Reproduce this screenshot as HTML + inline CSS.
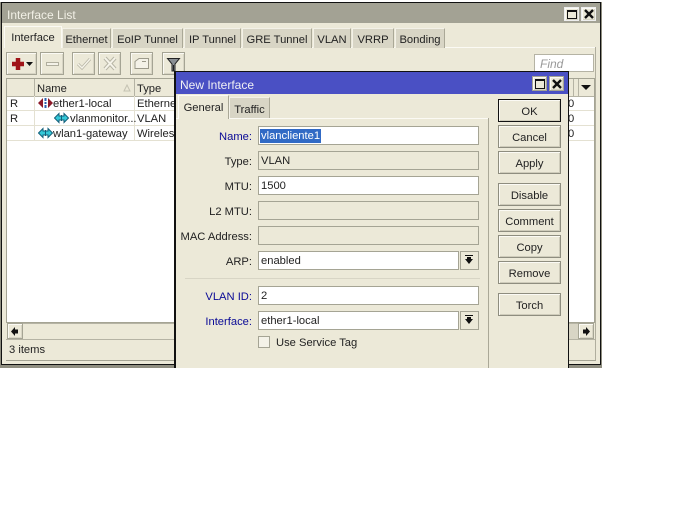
<!DOCTYPE html>
<html><head><meta charset="utf-8">
<style>
html,body{margin:0;padding:0;width:700px;height:525px;background:#fff;overflow:hidden}
body{font:11.2px "Liberation Sans",sans-serif;color:#222;position:relative}
div,span.t,svg{position:absolute}
.t{position:absolute;white-space:nowrap;line-height:14px;margin-top:1px}
.btn{background:#ece9d8;border:1px solid #a5a494;box-shadow:inset 1px 1px 0 #fbfaf4,inset -1px -1px 0 #d8d5c5;box-sizing:border-box}
.dbtn{width:63px;height:23px;left:498px;text-align:center;line-height:24px;background:#ece9d8;border:1px solid #8e8d7f;box-sizing:border-box;box-shadow:inset 1px 1px 0 #fbfaf4,inset -1px -1px 0 #cfccbb}
.tab{top:28px;height:20px;background:#d8d5c5;border:1px solid #f3f1e7;border-right-color:#aaa897;border-bottom:0;box-sizing:border-box;text-align:center;line-height:22px}
.in{left:258px;width:221px;height:19px;box-sizing:border-box;border:1px solid #a5a494;background:#fff;padding-left:2px;line-height:19px}
.ro{background:#ece9d8}
.lb{right:448px;line-height:14px;white-space:nowrap}
.blue{color:#0a0a96}
.drop{left:460px;width:19px;height:19px;background:#ece9d8;border:1px solid #a5a494;box-sizing:border-box}
.hl{height:1px;background:#e4e1d2}
</style></head><body>

<!-- outer window -->
<div style="left:0;top:2px;width:602px;height:366px;background:#8f8e80"></div>
<div style="left:1px;top:2px;width:600px;height:363px;background:#111"></div>
<div style="left:2px;top:3px;width:598px;height:361px;background:#ece9d8"></div>
<div style="left:2px;top:3px;width:598px;height:20px;background:#a3a294"></div>
<span class="t" style="left:7px;top:8px;margin-top:0;color:#f2f0e6;font-size:12px">Interface List</span>
<div class="btn" style="left:564px;top:7px;width:15px;height:14px;border-color:#eee"><div style="left:2px;top:2px;width:8px;height:6px;border:1px solid #111;border-top-width:2px"></div></div>
<div class="btn" style="left:581px;top:7px;width:15px;height:14px;border-color:#eee"><svg style="left:2px;top:1px" width="10" height="10"><path d="M1 1l8 8M9 1L1 9" stroke="#111" stroke-width="2.400"/></svg></div>

<!-- tabs -->
<div style="left:6px;top:47px;width:590px;height:1px;background:#fbfaf4"></div>
<div style="left:595px;top:47px;width:1px;height:314px;background:#b0ae9e"></div>
<div style="left:4px;top:26px;width:58px;height:22px;background:#ece9d8;border:1px solid #fbfaf4;border-bottom:0;box-sizing:border-box;text-align:center;line-height:22px">Interface</div>
<div class="tab" style="left:62px;width:49px">Ethernet</div>
<div class="tab" style="left:112px;width:71px">EoIP Tunnel</div>
<div class="tab" style="left:184px;width:57px">IP Tunnel</div>
<div class="tab" style="left:242px;width:70px">GRE Tunnel</div>
<div class="tab" style="left:313px;width:38px">VLAN</div>
<div class="tab" style="left:352px;width:42px">VRRP</div>
<div class="tab" style="left:395px;width:50px">Bonding</div>

<!-- toolbar -->
<div class="btn" style="left:6px;top:52px;width:31px;height:23px"></div>
<svg style="left:10px;top:56px" width="24" height="15"><path d="M2 8h12M8 2v12" stroke="#a01418" stroke-width="4.500"/><path d="M16 6h7l-3.500 4z" fill="#111"/></svg>
<div class="btn" style="left:40px;top:52px;width:24px;height:23px"></div>
<div style="left:46px;top:62px;width:11px;height:2px;border:1px solid #b0ae9e;background:#f4f2e8"></div>
<div class="btn" style="left:72px;top:52px;width:23px;height:23px"></div>
<svg style="left:76px;top:56px" width="16" height="15"><path d="M2 8l4 4 8-9" stroke="#b8b6a6" stroke-width="3" fill="none"/><path d="M2 8l4 4 8-9" stroke="#f6f4ea" stroke-width="1.400" fill="none"/></svg>
<div class="btn" style="left:98px;top:52px;width:23px;height:23px"></div>
<svg style="left:102px;top:56px" width="16" height="15"><path d="M3 2l10 11M13 2L3 13" stroke="#b8b6a6" stroke-width="4" fill="none"/><path d="M3 2l10 11M13 2L3 13" stroke="#f6f4ea" stroke-width="2" fill="none"/></svg>
<div class="btn" style="left:130px;top:52px;width:23px;height:23px"></div>
<svg style="left:134px;top:57px" width="16" height="14"><path d="M1 4.500l4-3h9.500v10H1z" stroke="#9c9a8b" fill="#f4f2e8"/><path d="M8 4.500h4" stroke="#9c9a8b"/></svg>
<div class="btn" style="left:162px;top:52px;width:23px;height:23px"></div>
<svg style="left:166px;top:56px" width="16" height="16"><path d="M1.500 2.500h12l-4.500 5.500v7H6V8z" fill="#8a8f94" stroke="#222"/><path d="M7 9h1v6H7z" fill="#222"/></svg>
<div style="left:534px;top:54px;width:60px;height:18px;box-sizing:border-box;background:#fff;border:1px solid #b5b3a4"></div>
<span class="t" style="left:540px;top:56px;color:#999;font-style:italic;font-size:12px">Find</span>

<!-- table -->
<div style="left:6px;top:78px;width:589px;height:245px;background:#fff;border:1px solid #a5a494;box-sizing:border-box"></div>
<div style="left:7px;top:79px;width:587px;height:17px;background:#ece9d8;border-bottom:1px solid #b5b3a4"></div>
<div style="left:34px;top:79px;width:1px;height:17px;background:#b5b3a4"></div>
<div style="left:134px;top:79px;width:1px;height:17px;background:#b5b3a4"></div>
<div style="left:573px;top:79px;width:1px;height:17px;background:#b5b3a4"></div>
<div style="left:578px;top:79px;width:1px;height:17px;background:#b5b3a4"></div>
<span class="t" style="left:37px;top:81px">Name</span>
<svg style="left:123px;top:84px" width="8" height="8"><path d="M4 1l3 6H1z" fill="none" stroke="#c4c2b2"/></svg>
<span class="t" style="left:137px;top:81px">Type</span>
<svg style="left:581px;top:84px" width="12" height="8"><path d="M0 1h10l-5 5z" fill="#111"/></svg>
<div class="hl" style="left:7px;top:110px;width:587px"></div>
<div class="hl" style="left:7px;top:125px;width:587px"></div>
<div class="hl" style="left:7px;top:140px;width:587px"></div>
<div style="left:34px;top:96px;width:1px;height:45px;background:#e4e1d2"></div>
<div style="left:134px;top:96px;width:1px;height:45px;background:#e4e1d2"></div>
<span class="t" style="left:10px;top:96px">R</span>
<span class="t" style="left:10px;top:111px">R</span>
<svg style="left:38px;top:97px" width="15" height="12"><path d="M5 1L0 6l5 5zM10 1l5 5-5 5z" fill="#8c1a2a"/><path d="M7.500 1v3M7.500 5v2M7.500 8v3" stroke="#2a5fb0" stroke-width="2"/></svg>
<span class="t" style="left:53px;top:96px">ether1-local</span>
<svg style="left:54px;top:112px" width="15" height="12"><path d="M.5 6L5 1.500V4h5V1.500L14.500 6 10 10.500V8H5v2.500z" fill="#35c8d8" stroke="#14607a"/><path d="M7.500 3v6" stroke="#14607a"/></svg>
<span class="t" style="left:70px;top:111px">vlanmonitor...</span>
<svg style="left:38px;top:127px" width="15" height="12"><path d="M.5 6L5 1.500V4h5V1.500L14.500 6 10 10.500V8H5v2.500z" fill="#35c8d8" stroke="#14607a"/><path d="M7.500 3v6" stroke="#14607a"/></svg>
<span class="t" style="left:53px;top:126px">wlan1-gateway</span>
<span class="t" style="left:137px;top:96px">Ethernet</span>
<span class="t" style="left:137px;top:111px">VLAN</span>
<span class="t" style="left:137px;top:126px">Wireless</span>
<span class="t" style="left:568px;top:96px">0</span>
<span class="t" style="left:568px;top:111px">0</span>
<span class="t" style="left:568px;top:126px">0</span>

<!-- scrollbar -->
<div style="left:7px;top:323px;width:587px;height:16px;background:#ece9d8;border-top:1px solid #b5b3a4;box-sizing:border-box"></div>
<div style="left:500px;top:324px;width:78px;height:15px;background:#d8d5c5"></div>
<div class="btn" style="left:7px;top:323px;width:16px;height:16px"></div>
<svg style="left:11px;top:327px" width="8" height="9"><path d="M0 4.500L4 0v2.500h3v4H4V9z" fill="#111"/></svg>
<div class="btn" style="left:578px;top:323px;width:16px;height:16px"></div>
<svg style="left:583px;top:327px" width="8" height="9"><path d="M7 4.500L3 0v2.500H0v4h3V9z" fill="#111"/></svg>
<div style="left:6px;top:339px;width:589px;height:1px;background:#b5b3a4"></div>
<div style="left:6px;top:360px;width:590px;height:1px;background:#a5a494"></div>
<span class="t" style="left:9px;top:342px">3 items</span>

<!-- dialog -->
<div style="left:174px;top:71px;width:395px;height:297px;background:#111"></div>
<div style="left:176px;top:72px;width:392px;height:296px;background:#ece9d8"></div>
<div style="left:176px;top:72px;width:392px;height:22px;background:#4a50c4"></div>
<span class="t" style="left:180px;top:78px;margin-top:0;color:#f0f0f4;font-size:12px">New Interface</span>
<div class="btn" style="left:532px;top:76px;width:15px;height:15px"><div style="left:2px;top:2px;width:8px;height:7px;border:1px solid #111;border-top-width:2px"></div></div>
<div class="btn" style="left:549px;top:76px;width:15px;height:15px"><svg style="left:2px;top:2px" width="10" height="10"><path d="M1 1l8 8M9 1L1 9" stroke="#111" stroke-width="2.400"/></svg></div>

<!-- dialog tabs -->
<div style="left:176px;top:118px;width:312px;height:1px;background:#fbfaf4"></div>
<div style="left:488px;top:118px;width:1px;height:250px;background:#aaa897"></div>
<div style="left:229px;top:97px;width:41px;height:21px;background:#d8d5c5;border:1px solid #f3f1e7;border-right-color:#aaa897;border-bottom:0;box-sizing:border-box;text-align:center;line-height:24px">Traffic</div>
<div style="left:178px;top:95px;width:51px;height:24px;background:#ece9d8;border:1px solid #fbfaf4;border-bottom:0;border-right-color:#aaa897;box-sizing:border-box;text-align:center;line-height:24px">General</div>

<!-- form -->
<span class="t lb blue" style="top:129px">Name:</span>
<div class="in" style="top:126px"><span style="background:#316ac5;color:#fff;position:static;padding:1px 1px;margin-left:-1px">vlancliente1</span></div>
<span class="t lb" style="top:154px">Type:</span>
<div class="in ro" style="top:151px">VLAN</div>
<span class="t lb" style="top:179px">MTU:</span>
<div class="in" style="top:176px">1500</div>
<span class="t lb" style="top:204px">L2 MTU:</span>
<div class="in ro" style="top:201px"></div>
<span class="t lb" style="top:229px">MAC Address:</span>
<div class="in ro" style="top:226px"></div>
<span class="t lb" style="top:254px">ARP:</span>
<div class="in" style="top:251px;width:201px">enabled</div>
<div class="drop" style="top:251px"></div>
<svg style="left:464px;top:255px" width="10" height="10"><path d="M1 0h8v1H1zM3 2h4v2h2L5 9 1 4h2z" fill="#111"/></svg>
<div style="left:185px;top:278px;width:295px;height:1px;background:#d8d5c5"></div>
<span class="t lb blue" style="top:289px">VLAN ID:</span>
<div class="in" style="top:286px">2</div>
<span class="t lb blue" style="top:314px">Interface:</span>
<div class="in" style="top:311px;width:201px">ether1-local</div>
<div class="drop" style="top:311px"></div>
<svg style="left:464px;top:315px" width="10" height="10"><path d="M1 0h8v1H1zM3 2h4v2h2L5 9 1 4h2z" fill="#111"/></svg>
<div style="left:258px;top:336px;width:12px;height:12px;background:#f4f2e8;border:1px solid #a5a494;box-sizing:border-box"></div>
<span class="t" style="left:276px;top:335px">Use Service Tag</span>

<!-- dialog buttons -->
<div class="dbtn" style="top:99px;border-color:#111">OK</div>
<div class="dbtn" style="top:125px">Cancel</div>
<div class="dbtn" style="top:151px">Apply</div>
<div class="dbtn" style="top:183px">Disable</div>
<div class="dbtn" style="top:209px">Comment</div>
<div class="dbtn" style="top:235px">Copy</div>
<div class="dbtn" style="top:261px">Remove</div>
<div class="dbtn" style="top:293px">Torch</div>

</body></html>
